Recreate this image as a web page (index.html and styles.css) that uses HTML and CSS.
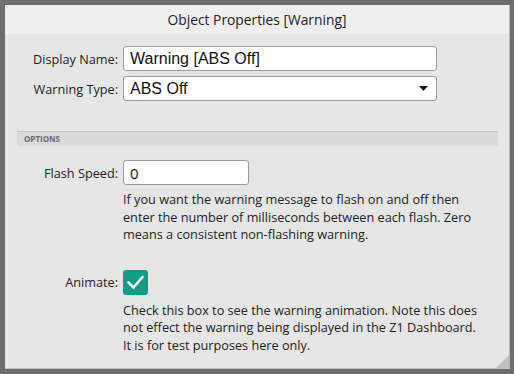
FILE: index.html
```html
<!DOCTYPE html>
<html>
<head>
<meta charset="utf-8">
<link rel="stylesheet" href="styles.css">
</head>
<body>
<div class="dialog">
  <div class="titlebar">Object Properties [Warning]</div>
  <div class="content">
    <div class="form">
      <label class="lbl">Display Name:</label>
      <div class="field wide">Warning [ABS Off]</div>
      <label class="lbl">Warning Type:</label>
      <div class="field wide select">
        <span>ABS Off</span>
        <svg class="arrow" width="9" height="5" viewBox="0 0 9 5"><path d="M0 0H9L4.5 5Z" fill="#111"/></svg>
      </div>
    </div>
    <div class="section">OPTIONS</div>
    <div class="form opts">
      <label class="lbl">Flash Speed:</label>
      <div class="field short">0</div>
      <div></div>
      <p class="help">If you want the warning message to flash on and off then enter the number of milliseconds between each flash. Zero means a consistent non-flashing warning.</p>
      <label class="lbl anim">Animate:</label>
      <div class="check anim">
        <svg width="25" height="25" viewBox="0 0 25 25"><path d="M5.5 12.5L10.5 17.5L19.5 7" fill="none" stroke="#fff" stroke-width="2.6" stroke-linecap="round" stroke-linejoin="round"/></svg>
      </div>
      <div></div>
      <p class="help second">Check this box to see the warning animation. Note this does not effect the warning being displayed in the Z1 Dashboard. It is for test purposes here only.</p>
    </div>
    <div class="grip"></div>
  </div>
</div>
</body>
</html>
```
FILE: styles.css
```css
html, body {
  margin: 0;
  padding: 0;
}
body {
  background: #6d6d6d;
  width: 514px;
  height: 374px;
  box-sizing: border-box;
  padding: 5px 4px 5px 5px;
  font-family: "Open Sans", "Noto Sans", sans-serif;
  color: #1e1e1e;
}
.dialog {
  width: 505px;
  height: 364px;
  box-sizing: border-box;
  background: #e6e6e6;
  border-right: 1px solid #b8b8b8;
  border-bottom: 1px solid #c4c4c4;
  display: flex;
  flex-direction: column;
}
.titlebar {
  height: 29px;
  background: #efefef;
  display: flex;
  align-items: center;
  justify-content: center;
  font-size: 13.8px;
  color: #222;
}
.content {
  position: relative;
  flex: 1;
  padding-top: 12px;
}
.form {
  display: grid;
  grid-template-columns: 113px auto;
  column-gap: 5px;
  row-gap: 5px;
  align-items: center;
}
.lbl {
  text-align: right;
  font-size: 12.7px;
  color: #222;
}
.field {
  height: 25px;
  box-sizing: border-box;
  background: #fff;
  border: 1px solid #9c9c9c;
  border-radius: 3px;
  font-family: "Liberation Sans", Arial, sans-serif;
  font-size: 16px;
  color: #111;
  display: flex;
  align-items: center;
  padding-left: 6px;
}
.wide { width: 314px; }
.short { width: 126px; font-family: "Open Sans", sans-serif; font-size: 15px; }
.select {
  justify-content: space-between;
  padding-right: 8px;
}
.section {
  margin: 30px 11px 0 12px;
  height: 15px;
  box-sizing: border-box;
  border-top: 1px solid #c2c2c2;
  background: #dadada;
  font-size: 8px;
  font-weight: 700;
  color: #6a6a6a;
  padding-left: 7px;
  line-height: 14px;
}
.opts {
  margin-top: 14px;
  row-gap: 0;
}
.help {
  margin: 6px 0 0 0;
  font-size: 12.7px;
  line-height: 17.5px;
  color: #222;
  width: 360px;
}
.help.second { margin-top: 7px; }
.anim { margin-top: 26px; }
.check {
  width: 25px;
  height: 25px;
  background: #129c84;
  border-radius: 3px;
  display: flex;
}
.grip {
  position: absolute;
  right: 0;
  bottom: 0;
  width: 0;
  height: 0;
  border-left: 13px solid transparent;
  border-bottom: 13px solid #c0c0c0;
}
```
